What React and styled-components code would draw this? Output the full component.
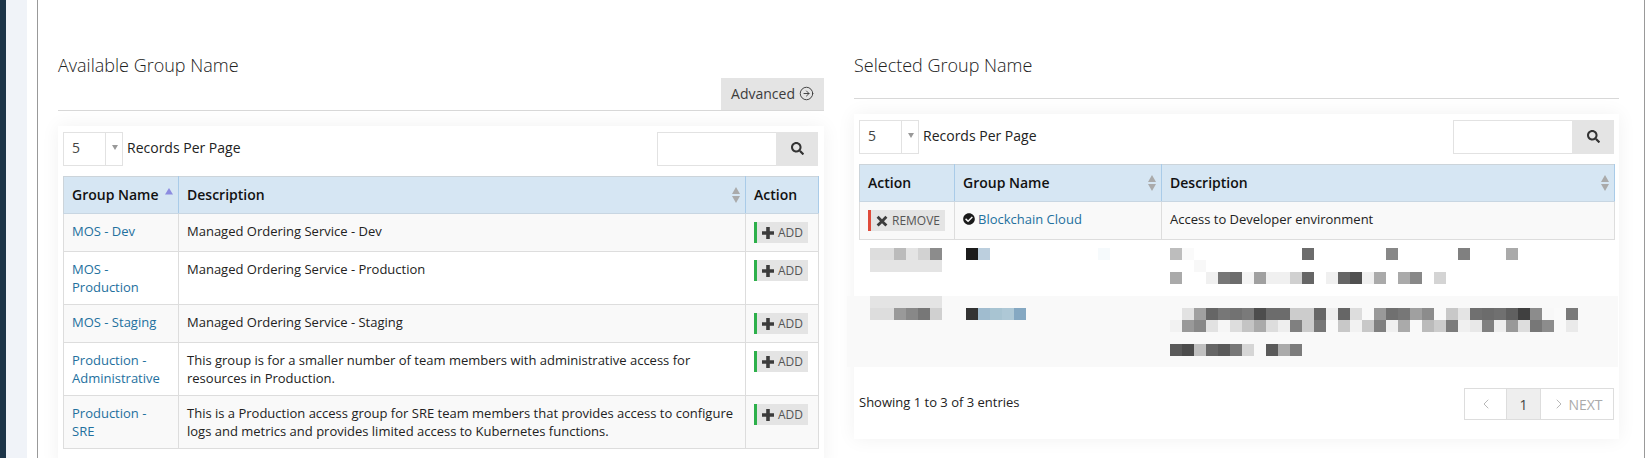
import styled, { createGlobalStyle } from "styled-components";
import { FaCheckCircle, FaSearch } from "react-icons/fa";
import { ChevronLeft, ChevronRight, CircleArrowRight } from "lucide-react";

const GlobalStyle = createGlobalStyle`
  html, body {
    margin: 0;
    height: 458px;
    overflow: hidden;
    background: #fff;
    font-family: "Open Sans", "Liberation Sans", sans-serif;
    font-size: 13px;
    color: #222;
  }
`;

const Page = styled.div`
  display: flex;
  height: 458px;
  overflow: hidden;
`;
const Rail = styled.div`
  width: 6px;
  flex: none;
  background: #1c3448;
`;
const Gutter = styled.div`
  width: 21px;
  flex: none;
  background: #f0f3f8;
  margin-right: 10px;
`;
const Panel = styled.main`
  flex: 1;
  margin-right: 2px;
  padding: 0 25px 0 20px;
  border-left: 1px solid #999;
  border-right: 1px solid #999;
  display: grid;
  grid-template-columns: 766px 765px;
  column-gap: 30px;
  align-items: start;
`;
const Header = styled.header`
  padding-top: 53px;
  padding-bottom: ${(p) => p.$bottom}px;
  border-bottom: 1px solid #d8d8d8;
  display: flex;
  flex-direction: column;
`;
const Title = styled.h2`
  margin: 0;
  font-size: 18px;
  line-height: 24px;
  font-weight: 300;
  color: #222;
`;
const AdvancedButton = styled.button`
  align-self: flex-end;
  width: 103px;
  height: 32px;
  margin-top: 1px;
  padding: 0 0 2px;
  border: 0;
  background: #e4e4e4;
  color: #3c3c3c;
  font: 400 14px "Open Sans", sans-serif;
  display: flex;
  align-items: center;
  justify-content: center;
  gap: 4px;
`;
const Card = styled.section`
  margin-top: 15px;
  padding: 6px ${(p) => p.$right}px ${(p) => p.$bottom}px 5px;
  background: #fff;
  box-shadow: 0 0 18px rgba(0, 0, 0, 0.06);
`;
const Toolbar = styled.div`
  display: flex;
  justify-content: space-between;
  align-items: center;
  margin-bottom: 10px;
`;
const PerPage = styled.div`
  display: flex;
  align-items: center;
  gap: 4px;
  font-size: 14px;
`;
const PerPageLabel = styled.span`
  padding-bottom: 3px;
`;
const SelectBox = styled.div`
  width: 60px;
  height: 34px;
  box-sizing: border-box;
  border: 1px solid #e2e2e2;
  display: grid;
  grid-template-columns: 41px 18px;
  align-items: center;
  color: #444;
`;
const SelectValue = styled.span`
  padding: 0 0 3px 8px;
`;
const SelectArrow = styled.span`
  height: 100%;
  border-left: 1px solid #e2e2e2;
  display: flex;
  justify-content: center;
  padding-top: 12px;
  box-sizing: border-box;
  &::after {
    content: "";
    border-left: 3px solid transparent;
    border-right: 3px solid transparent;
    border-top: 5px solid #999;
  }
`;
const Search = styled.div`
  display: flex;
  width: 161px;
  height: 34px;
`;
const SearchInput = styled.input`
  flex: 1;
  min-width: 0;
  box-sizing: border-box;
  border: 1px solid #e2e2e2;
  border-right: 0;
  padding: 0;
  outline: none;
`;
const SearchButton = styled.button`
  width: 42px;
  border: 0;
  padding: 0 0 2px;
  background: #e4e4e4;
  color: #333;
  display: flex;
  align-items: center;
  justify-content: center;
  font-size: 13px;
`;
const Table = styled.table`
  width: 100%;
  table-layout: fixed;
  border-collapse: collapse;
  font-size: 13px;
  line-height: 18px;
`;
const Th = styled.th`
  height: 37px;
  box-sizing: border-box;
  padding: 0 5px 0 8px;
  background: #d6e6f3;
  color: #111;
  font-size: 14px;
  font-weight: 600;
  text-align: left;
  border-top: 1px solid #ccd4da;
  border-bottom: 1px solid #c8d6e2;
  border-left: 1px solid #a9cbe8;
  border-right: 1px solid #a9cbe8;
  &:first-child {
    border-left-color: #ccd4da;
  }
`;
const ThInner = styled.div`
  display: flex;
  justify-content: space-between;
  align-items: center;
`;
const Row = styled.tr`
  background: ${(p) => (p.$odd ? "#f9f9f9" : "#fff")};
`;
const Td = styled.td`
  padding: 8px;
  vertical-align: top;
  border: 1px solid #ddd;
`;
const GroupLink = styled.a`
  color: #23709e;
  text-decoration: none;
`;
const SortIcon = styled.svg`
  width: 8px;
  height: 16px;
  flex: none;
  fill: ${(p) => p.$fill};
`;
const ActionButton = styled.button`
  display: inline-flex;
  align-items: center;
  gap: 4px;
  height: 21px;
  padding: 0 5px;
  border: 0;
  border-left: 3px solid ${(p) => p.$accent};
  background: #e4e4e4;
  color: #555;
  font: 400 12px "Open Sans", sans-serif;
  vertical-align: top;
`;
const GlyphIcon = styled.svg`
  width: 12px;
  height: 12px;
  flex: none;
  fill: #3c3c3c;
`;
const SelectedName = styled.span`
  display: flex;
  align-items: center;
  gap: 3px;
  svg {
    font-size: 12px;
    color: #1a1a1a;
    flex: none;
  }
`;
const MaskedRow = styled.svg`
  display: block;
  background: ${(p) => p.$bg};
  margin-left: ${(p) => p.$left}px;
`;
const Footer = styled.div`
  display: flex;
  justify-content: space-between;
  align-items: center;
  padding: 21px 0 19px;
`;
const FooterText = styled.span`
  padding-bottom: 4px;
`;
const Pagination = styled.nav`
  display: flex;
  height: 32px;
  box-sizing: border-box;
  border: 1px solid #ddd;
  color: #aaa;
  font-size: 14px;
`;
const PageItem = styled.span`
  width: ${(p) => p.$width}px;
  box-sizing: border-box;
  display: flex;
  align-items: center;
  justify-content: center;
  gap: 1px;
  background: ${(p) => (p.$active ? "#eee" : "#fff")};
  color: ${(p) => (p.$active ? "#444" : "#aaa")};
  border-left: ${(p) => (p.$divided ? "1px solid #ddd" : "0")};
`;

const available = [
  {
    name: "MOS - Dev",
    description: "Managed Ordering Service - Dev",
  },
  {
    name: "MOS - Production",
    description: "Managed Ordering Service - Production",
  },
  {
    name: "MOS - Staging",
    description: "Managed Ordering Service - Staging",
  },
  {
    name: "Production - Administrative",
    description:
      "This group is for a smaller number of team members with administrative access for resources in Production.",
  },
  {
    name: "Production - SRE",
    description:
      "This is a Production access group for SRE team members that provides access to configure logs and metrics and provides limited access to Kubernetes functions.",
  },
];

// pixelated cells of the blurred rows: [start x, y, colours], 12px squares, null = gap
const maskA = [
  [870, 248, ["#ddd", "#ddd", "#bbb", "#e4e4e4", "#d2d2d2", "#8c8c8c"]],
  [870, 260, ["#e4e4e4", "#e4e4e4", "#e4e4e4", "#e4e4e4", "#e4e4e4", "#e4e4e4"]],
  [966, 248, ["#1c1c1c", "#bccfde"]],
  [1098, 248, ["#f6fafc"]],
  [1170, 248, ["#bdbdbd", "#fafafa"]],
  [1302, 248, ["#6c6c6c"]],
  [1386, 248, ["#888"]],
  [1458, 248, ["#808080"]],
  [1506, 248, ["#aaa"]],
  [1194, 260, ["#f8f8f8"]],
  [1170, 272, ["#aaa", null, null, "#f0f0f0", "#777", "#6c6c6c", "#f4f4f4", "#a0a0a0", "#f0f0f0", "#f0f0f0", "#d0d0d0", "#666", null, "#f0f0f0", "#666", "#505050", "#f0f0f0", "#aaa", null, "#aaa", "#888", null, "#d4d4d4"]],
];
const maskB = [
  [870, 296, ["#e4e4e4", "#e4e4e4", "#e4e4e4", "#e4e4e4", "#e4e4e4", "#e4e4e4"]],
  [870, 308, ["#ddd", "#ddd", "#999", "#888", "#777", "#d0d0d0"]],
  [966, 308, ["#333", "#a0bccf", "#a8c4d2", "#aec8d6", "#85a8c2"]],
  [1182, 308, ["#e2e2e2", "#a0a0a0", "#666", "#777", "#727272", "#7a7a7a", "#4d4d4d", "#6c6c6c", "#6c6c6c", "#ccc", "#ccc", "#666", "#eee", "#666", "#ddd", null, "#999", "#707070", "#777", "#a0a0a0", "#8c8c8c", null, "#c8c8c8", "#e4e4e4", "#707070", "#6c6c6c", "#707070", "#606060", "#404040", "#8c8c8c", "#f8f8f8", "#fafafa", "#7a7a7a"]],
  [1170, 320, ["#f2f2f2", "#999", "#888", "#e2e2e2", "#f6f6f6", "#ddd", "#c4c4c4", "#aaa", "#ddd", "#eee", "#808080", "#ccc", "#777", null, "#c8c8c8", "#f2f2f2", "#c8c8c8", "#808080", "#f0f0f0", "#aaa", null, "#bbb", "#ccc", "#7c7c7c", "#f0f0f0", "#e8e8e8", "#808080", "#eee", "#999", "#ddd", "#777", "#8c8c8c", null, "#eaeaea"]],
  [1170, 344, ["#5a5a5a", "#4c4c4c", "#c0c0c0", "#666", "#5a5a5a", "#777", "#d6d6d6", null, "#5a5a5a", "#aaa", "#7c7c7c"]],
];

function MaskCells({ rows }) {
  return rows.flatMap(([x, y, colours]) =>
    colours.map((c, i) =>
      c ? <rect key={`${x}-${y}-${i}`} x={x + i * 12} y={y} width="12" height="12" fill={c} /> : null
    )
  );
}

function SortUp() {
  return (
    <SortIcon viewBox="0 0 8 16" $fill="#8c8ce0">
      <path d="M4 1l4 6.5H0z" />
    </SortIcon>
  );
}

function SortBoth() {
  return (
    <SortIcon viewBox="0 0 8 16" $fill="#aaa">
      <path d="M4 0l4 7H0zM4 16L0 9h8z" />
    </SortIcon>
  );
}

function PlusIcon() {
  return (
    <GlyphIcon viewBox="0 0 12 12">
      <path d="M4.2 0h3.6v4.2H12v3.6H7.8V12H4.2V7.8H0V4.2h4.2z" />
    </GlyphIcon>
  );
}

function CrossIcon() {
  return (
    <GlyphIcon viewBox="0 0 12 12">
      <path d="M2.6.8L6 4.2 9.4.8l2 2L8 6.2l3.4 3.4-2 2L6 8.2l-3.4 3.4-2-2L4 6.2.6 2.8z" />
    </GlyphIcon>
  );
}

function TableTools() {
  return (
    <Toolbar>
      <PerPage>
        <SelectBox>
          <SelectValue>5</SelectValue>
          <SelectArrow />
        </SelectBox>
        <PerPageLabel>Records Per Page</PerPageLabel>
      </PerPage>
      <Search>
        <SearchInput aria-label="Search" />
        <SearchButton>
          <FaSearch />
        </SearchButton>
      </Search>
    </Toolbar>
  );
}

function App() {
  return (
    <Page>
      <GlobalStyle />
      <Rail />
      <Gutter />
      <Panel>
        <div>
          <Header $bottom={0}>
            <Title>Available Group Name</Title>
            <AdvancedButton>
              Advanced <CircleArrowRight size={15} strokeWidth={1.5} />
            </AdvancedButton>
          </Header>
          <Card $right={6} $bottom={20}>
            <TableTools />
            <Table>
              <colgroup>
                <col width="115" />
                <col width="567" />
                <col width="73" />
              </colgroup>
              <thead>
                <tr>
                  <Th>
                    <ThInner>
                      Group Name <SortUp />
                    </ThInner>
                  </Th>
                  <Th>
                    <ThInner>
                      Description <SortBoth />
                    </ThInner>
                  </Th>
                  <Th>Action</Th>
                </tr>
              </thead>
              <tbody>
                {available.map((g, i) => (
                  <Row key={g.name} $odd={i % 2 === 0}>
                    <Td>
                      <GroupLink href="#">{g.name}</GroupLink>
                    </Td>
                    <Td>{g.description}</Td>
                    <Td>
                      <ActionButton $accent="#2db04b">
                        <PlusIcon /> ADD
                      </ActionButton>
                    </Td>
                  </Row>
                ))}
              </tbody>
            </Table>
          </Card>
        </div>
        <div>
          <Header $bottom={21}>
            <Title>Selected Group Name</Title>
          </Header>
          <Card $right={5} $bottom={0}>
            <TableTools />
            <Table>
              <colgroup>
                <col width="95" />
                <col width="207" />
                <col width="453" />
              </colgroup>
              <thead>
                <tr>
                  <Th>Action</Th>
                  <Th>
                    <ThInner>
                      Group Name <SortBoth />
                    </ThInner>
                  </Th>
                  <Th>
                    <ThInner>
                      Description <SortBoth />
                    </ThInner>
                  </Th>
                </tr>
              </thead>
              <tbody>
                <Row $odd>
                  <Td>
                    <ActionButton $accent="#e04b3a">
                      <CrossIcon /> REMOVE
                    </ActionButton>
                  </Td>
                  <Td>
                    <SelectedName>
                      <FaCheckCircle />
                      <GroupLink href="#">Blockchain Cloud</GroupLink>
                    </SelectedName>
                  </Td>
                  <Td>Access to Developer environment</Td>
                </Row>
              </tbody>
            </Table>
            <MaskedRow width="760" height="56" viewBox="858 240 760 56" $bg="#fff" $left={-1}>
              <MaskCells rows={maskA} />
            </MaskedRow>
            <MaskedRow width="771" height="71" viewBox="847 296 771 71" $bg="#f9f9f9" $left={-12}>
              <MaskCells rows={maskB} />
            </MaskedRow>
            <Footer>
              <FooterText>Showing 1 to 3 of 3 entries</FooterText>
              <Pagination>
                <PageItem $width={41}>
                  <ChevronLeft size={16} strokeWidth={1.25} />
                </PageItem>
                <PageItem $width={34} $active $divided>
                  1
                </PageItem>
                <PageItem $width={73} $divided>
                  <ChevronRight size={16} strokeWidth={1.25} /> NEXT
                </PageItem>
              </Pagination>
            </Footer>
          </Card>
        </div>
      </Panel>
    </Page>
  );
}

export default App;
